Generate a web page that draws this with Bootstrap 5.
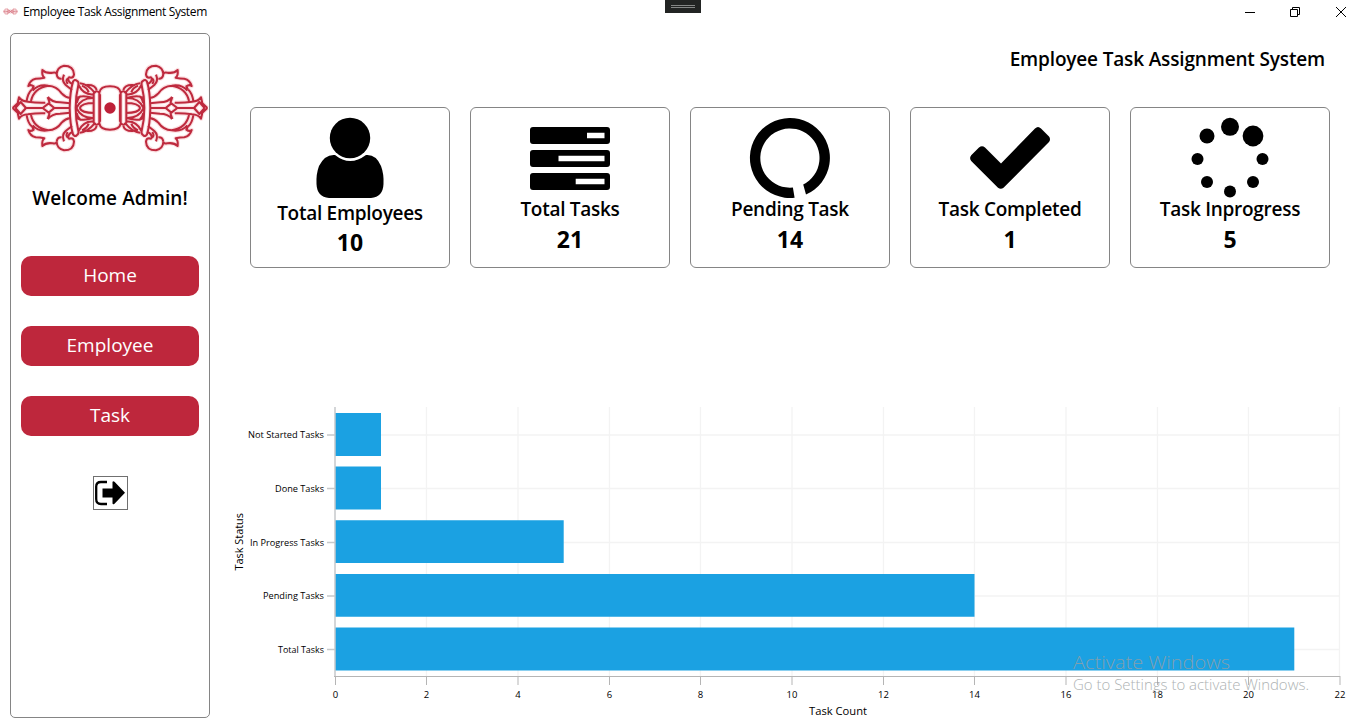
<!DOCTYPE html>
<html lang="en">
<head>
<meta charset="utf-8">
<meta name="viewport" content="width=device-width, initial-scale=1">
<title>Employee Task Assignment System</title>
<link href="https://cdn.jsdelivr.net/npm/bootstrap@5.3.0/dist/css/bootstrap.min.css" rel="stylesheet">
<style>
  body { font-family: "Open Sans", "Noto Sans", sans-serif; color: #000; background: #fff; height: 725px; overflow: hidden; }
  .titlebar { height: 23px; padding-left: 3px; font-size: 12px; line-height: 23px; }
  .title-text { letter-spacing: -.37px; margin-left: 5px; }
  .win-controls { margin-right: 10px; height: 20px; }
  .debug-handle { width: 36px; height: 13px; left: 665px; background: #222423; }
  .sidebar { width: 200px; height: 685px; margin: 10px 0 0 10px; border: 1px solid #858585; border-radius: 5px; }
  .brand-mark { width: 198px; height: 90px; margin-top: 29px; }
  .welcome { font-size: 19px; font-weight: 600; line-height: 28px; margin-top: 31px; letter-spacing: .08px; }
  .side-nav { width: 178px; margin-top: 44px; gap: 30px; }
  .btn-side { --bs-btn-color: #fff; --bs-btn-bg: #be273c; --bs-btn-hover-bg: #a82135; --bs-btn-hover-color: #fff; height: 40px; padding: 0 0 2px; font-size: 19px; line-height: 38px; border: 0; border-radius: 10px; }
  .btn-exit { width: 35px; height: 34px; margin-top: 40px; border: 1px solid #707070; background: #fff; padding: 0; border-radius: 0; }
  .heading { font-size: 19px; font-weight: 600; line-height: 28px; margin: 22px 41px 0 0; letter-spacing: -.16px; }
  .stats { margin: 34px 0 0 40px; gap: 20px; }
  .stat { width: 200px; height: 161px; border: 1px solid #858585; border-radius: 6px; padding-top: 10px; }
  .stat svg { width: 80px; height: 80px; overflow: visible; }
  .stat-label { font-size: 19px; font-weight: 600; line-height: 28px; letter-spacing: -.28px; margin-top: -3px; }
  .stat-label.tight { margin-top: 1px; }
  .stat-label.tight + .stat-num { margin-top: -1px; }
  .stat-num { font-size: 23px; font-weight: 700; line-height: 32px; }
  .chart { width: 1136px; height: 325px; margin-left: 20px; margin-top: 132px; }
  .watermark { left: 1073px; top: 650px; opacity: .8; }
</style>
</head>
<body class="position-relative">
<svg width="0" height="0" class="position-absolute" aria-hidden="true">
  <defs>
    <g id="quarter">
      <path d="M38 173L53 159L57 141Q65 153 84 154Q110 158 136 157M46 173L62 155L78 173H128L146 159L163 173H209M143 140L149 158M143 140Q156 156 180 156L210 159M80 151Q84 128 95 118M93 152Q101 113 145 106Q170 107 185 129Q196 141 211 143M98 121Q115 101 145 106M96 118L101 108Q92 101 85 107Q90 89 107 85Q120 85 133 82Q125 77 127 59Q138 70 158 67Q169 65 170 71Q171 51 192 46Q221 46 222 72Q221 82 213 82Q202 78 206 91Q209 99 219 101M192 73Q184 92 197 104L216 119M170 72Q172 86 185 85M207 84Q194 87 203 101"/>
      <path d="M209 173Q210 123 219 94Q224 86 230 91Q238 95 235 105Q227 136 227 173M240 99Q263 101 286 129M236 105Q252 136 282 132M246 106Q262 113 266 126M242 137Q232 144 230 158M280 143Q244 142 229 173M282 158Q245 158 239 173M232 142Q247 133 280 143M260 104Q285 102 290 119M281 173V129Q289 118 298 127V173M298 127Q301 108 330 108M300 132V173"/>
    </g>
    <g id="half"><use href="#quarter"/><use href="#quarter" transform="matrix(1 0 0 -1 0 346)"/></g>
    <g id="whole"><use href="#half"/><use href="#half" transform="matrix(-1 0 0 1 660 0)"/></g>
    <symbol id="vajra" viewBox="33 38 594 270">
      <g fill="none" stroke-linejoin="round">
        <use href="#whole" stroke="#fbdfe1" stroke-width="13"/>
        <use href="#whole" stroke="#be2a3e" stroke-width="6.200"/>
        <circle cx="330" cy="173" r="17" fill="#be2038"/>
      </g>
    </symbol>
  </defs>
</svg>

<header class="titlebar d-flex align-items-center">
  <svg width="15" height="9"><use href="#vajra"/></svg>
  <span class="title-text">Employee Task Assignment System</span>
  <div class="debug-handle position-absolute top-0">
    <svg width="36" height="13" class="d-block"><path d="M6 5.500H30M6 7.500H30" stroke="#858786"/></svg>
  </div>
  <svg class="win-controls ms-auto" width="111" height="20" fill="none" stroke="#000" viewBox="1245 0 111 20">
    <path d="M1245 10.500H1255M1290.500 7.500H1297.500V14.500H1290.500ZM1292.500 7.500V5.500H1299.500V12.500H1297.500M1336 5L1346 15M1346 5L1336 15"/>
  </svg>
</header>

<div class="d-flex">
  <aside class="sidebar d-flex flex-column align-items-center flex-shrink-0">
    <svg class="brand-mark"><use href="#vajra"/></svg>
    <div class="welcome">Welcome Admin!</div>
    <nav class="side-nav d-flex flex-column">
      <button class="btn btn-side">Home</button>
      <button class="btn btn-side">Employee</button>
      <button class="btn btn-side">Task</button>
    </nav>
    <button class="btn-exit d-flex" aria-label="Log out">
      <svg width="33" height="32" viewBox="0 0 33 32"><path d="M13 5H7Q2.200 5 2.200 9.500V22Q2.200 27 7 27H13" fill="none" stroke="#000" stroke-width="2.300"/><path d="M8.500 11.500H18.500V5Q19 3.500 20.500 4.800L31 15.800L20.500 26.700Q19 28 18.500 26.500V20.500H8.500Z"/></svg>
    </button>
  </aside>

  <main class="flex-grow-1">
    <h1 class="heading text-end">Employee Task Assignment System</h1>
    <section class="stats d-flex text-center">
      <div class="stat"><svg viewBox="0 0 80 80"><circle cx="40" cy="20" r="20.200"/><path d="M25 37Q40 49 56 37Q66 36 71 48Q74 56 73.500 66Q73 79 61 80H19Q7 79 6.500 66Q6 56 9 48Q15 36 25 37Z"/></svg>
        <div class="stat-label tight">Total Employees</div><div class="stat-num">10</div></div>
      <div class="stat"><svg viewBox="0 0 80 80"><path fill-rule="evenodd" d="M3 9H77Q80 9 80 12V23Q80 26 77 26H3Q0 26 0 23V12Q0 9 3 9ZM57 14.700V20.300H74.500V14.700ZM3 32H77Q80 32 80 35V46Q80 49 77 49H3Q0 49 0 46V35Q0 32 3 32ZM28.500 37.700V43.300H74.500V37.700ZM3 55H77Q80 55 80 58V69Q80 72 77 72H3Q0 72 0 69V58Q0 55 3 55ZM45.700 60.700V66.300H74.500V60.700Z"/></svg>
        <div class="stat-label">Total Tasks</div><div class="stat-num">21</div></div>
      <div class="stat"><svg viewBox="0 0 80 80"><path d="M42.900 69.500L44.600 79.700A40 40 0 1 1 56 76.600L53.200 66.500A29.600 29.600 0 1 0 42.900 69.500Z"/></svg>
        <div class="stat-label">Pending Task</div><div class="stat-num">14</div></div>
      <div class="stat"><svg viewBox="0 0 80 80"><path d="M1.200 37.200L9 29.500Q12 27 15 29.500L31 45.500L65 10.500Q68 7.500 71 10.500L79 18.500Q81 21 79 24L33.500 69.700Q30.800 72 28 69.700L1.200 43Q-1 40 1.200 37.200Z"/></svg>
        <div class="stat-label">Task Completed</div><div class="stat-num">1</div></div>
      <div class="stat"><svg viewBox="0 0 80 80"><circle cx="40" cy="8.800" r="9"/><circle cx="63" cy="18" r="10.400"/><circle cx="17" cy="18" r="7.500"/><circle cx="7.500" cy="41" r="6"/><circle cx="72.500" cy="41" r="6"/><circle cx="17" cy="64" r="6"/><circle cx="63" cy="64" r="6"/><circle cx="40" cy="73.500" r="6"/></svg>
        <div class="stat-label">Task Inprogress</div><div class="stat-num">5</div></div>
    </section>

    <svg class="chart d-block" viewBox="230 400 1136 325" font-size="9.500">
      <path d="M426.500 407V676M518 407V676M609.500 407V676M700.500 407V676M792 407V676M883.500 407V676M974.500 407V676M1066 407V676M1157.500 407V676M1248.500 407V676M1339.500 407V676M336 435H1340M336 488.500H1340M336 542.500H1340M336 596H1340M336 649.500H1340" stroke="#f3f3f3" stroke-width="1.300"/>
      <path d="M335 413H381V456H335ZM335 466.500H381V509.500H335ZM335 520.200H563.700V563H335ZM335 573.900H974.500V616.700H335ZM335 627.600H1294.300V670.400H335Z" fill="#1ba1e2"/>
      <path d="M335 407V676.500M327 435H335M327 488.500H335M327 542.500H335M327 596H335M327 649.500H335" stroke="#c6c9cb" stroke-width="1.500" fill="none"/>
      <path d="M334 676.500H1340.500M335.500 677V685M426.500 677V685M518 677V685M609.500 677V685M700.500 677V685M792 677V685M883.500 677V685M974.500 677V685M1066 677V685M1157.500 677V685M1248.500 677V685M1340 677V685" stroke="#b5b5b5" fill="none"/>
      <text x="248" y="438" textLength="76" lengthAdjust="spacingAndGlyphs">Not Started Tasks</text>
      <text x="275" y="492" textLength="49" lengthAdjust="spacingAndGlyphs">Done Tasks</text>
      <text x="250" y="546" textLength="74" lengthAdjust="spacingAndGlyphs">In Progress Tasks</text>
      <text x="263" y="599" textLength="61" lengthAdjust="spacingAndGlyphs">Pending Tasks</text>
      <text x="278" y="653" textLength="46" lengthAdjust="spacingAndGlyphs">Total Tasks</text>
      <g text-anchor="middle">
        <text x="335.500" y="698">0</text><text x="426.500" y="698">2</text><text x="518" y="698">4</text><text x="609.500" y="698">6</text><text x="700.500" y="698">8</text><text x="792" y="698">10</text><text x="883.500" y="698">12</text><text x="974.500" y="698">14</text><text x="1066" y="698">16</text><text x="1157.500" y="698">18</text><text x="1248.500" y="698">20</text><text x="1340" y="698">22</text>
      </g>
      <text x="809" y="715" font-size="11.500" textLength="58" lengthAdjust="spacingAndGlyphs">Task Count</text>
      <text transform="translate(242.500 570.500) rotate(-90)" font-size="11.500" textLength="57.500" lengthAdjust="spacingAndGlyphs">Task Status</text>
    </svg>
  </main>
</div>

<div class="watermark position-absolute">
  <svg width="250" height="46" fill="#9a9fa2" class="d-block">
    <text x="0" y="19" font-size="19" font-weight="350" textLength="157" lengthAdjust="spacingAndGlyphs">Activate Windows</text>
    <text x="0" y="40" font-size="14.500" font-weight="350" textLength="236" lengthAdjust="spacingAndGlyphs">Go to Settings to activate Windows.</text>
  </svg>
</div>
<script src="https://cdn.jsdelivr.net/npm/bootstrap@5.3.0/dist/js/bootstrap.bundle.min.js"></script>
</body>
</html>
